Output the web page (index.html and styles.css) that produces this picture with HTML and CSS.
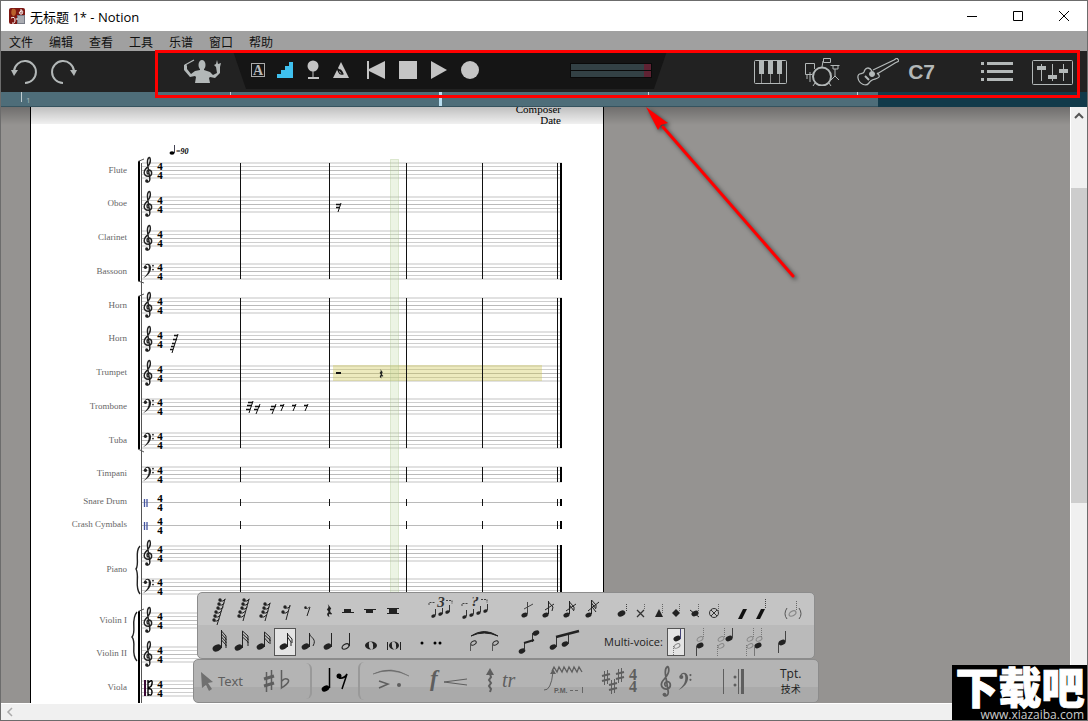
FILE: index.html
```
<!DOCTYPE html>
<html lang="zh-CN">
<head>
    <meta charset="utf-8">
    <title>无标题 1* - Notion</title>
    <link rel="stylesheet" href="styles.css">
</head>
<body>
    <!-- shared music symbols -->
    <svg class="sprite" aria-hidden="true">
        <symbol id="treble" viewBox="1 1 17 50" overflow="visible">
            <path d="M10 34C6 32 7 26 12 26C18 27 18 36 12 38C5 39 0 34 3 27C6 21 14 17 14 8C14 4 13 2 12 2C8 4 8 11 9 17L13 42C14 48 10 50 7 49" fill="none" stroke="currentColor" stroke-width="2.800"/>
            <circle cx="7" cy="47" r="3" fill="currentColor"/>
        </symbol>
        <symbol id="bass" viewBox="1 2 19 25" overflow="visible">
            <circle cx="5" cy="8" r="3" fill="currentColor"/>
            <path d="M3 8C3 0 15 -1 15 9C15 17 9 23 1 27C8 21 11 16 11 9C11 3 8 1 3 8Z" fill="currentColor"/>
            <circle cx="18.500" cy="5" r="1.600" fill="currentColor"/>
            <circle cx="18.500" cy="12" r="1.600" fill="currentColor"/>
        </symbol>
        <symbol id="hook" viewBox="0 0 8 5" overflow="visible">
            <circle cx="2" cy="2" r="1.700" fill="currentColor"/>
            <path d="M2 3Q5 4 7.500 1" fill="none" stroke="currentColor"/>
        </symbol>
        <symbol id="head" viewBox="0 0 10 8" overflow="visible">
            <ellipse cx="5" cy="4" rx="4.600" ry="3.200" transform="rotate(-25 5 4)" fill="currentColor"/>
        </symbol>
        <symbol id="open-head" viewBox="0 0 10 8" overflow="visible">
            <ellipse cx="5" cy="4" rx="4.300" ry="2.600" transform="rotate(-30 5 4)" fill="none" stroke="currentColor" stroke-width="1.300"/>
        </symbol>
        <symbol id="quarter-rest" viewBox="0 0 8 16" overflow="visible">
            <path d="M2 0L6 5Q3 8 7 11L6 12Q2 10 4 15Q-1 12 3 9L1 6Q4 4 2 0Z" fill="currentColor"/>
        </symbol>
        <symbol id="staff" viewBox="0 0 420 17" overflow="visible">
            <path d="M0 1H420M0 16H420" stroke="#e1e1e1" stroke-width="2"/>
            <path d="M0 4.500H420M0 12.500H420" stroke="#cecece"/>
            <path d="M0 8.500H420" stroke="#bababa"/>
        </symbol>
        <symbol id="meter" viewBox="0 0 8 18" overflow="visible">
            <text x="4" y="8" class="meter">4</text>
            <text x="4" y="17" class="meter">4</text>
        </symbol>
    </svg>

    <div class="window">
        <header class="titlebar">
            <svg class="app-icon" width="16" height="16" viewBox="0 0 16 16">
                <rect width="16" height="16" rx="2" fill="#7d1712"/>
                <path d="M3 1Q7 0 7 4T4 8Q1 6 3 1Z" fill="#b9612c"/>
                <path d="M8 7H16V16H8Z" fill="#777b86"/>
                <path d="M10 8V15M12 8V15M14 8V15" stroke="#ddd"/>
                <path d="M11 6Q9 4 12 3T13 6M12 1V7M2 10Q6 8 6 12T3 15M8 10V12" stroke="#fff" fill="none"/>
            </svg>
            <h1>无标题 1* - Notion</h1>
            <div class="window-buttons">
                <button aria-label="Minimize"><svg width="12" height="12"><path d="M1 6.500H11" stroke="#000"/></svg></button>
                <button aria-label="Maximize"><svg width="12" height="12"><path d="M1.500 1.500H10.500V10.500H1.500Z" stroke="#000" fill="none"/></svg></button>
                <button aria-label="Close"><svg width="12" height="12"><path d="M1 1L11 11M11 1L1 11" stroke="#000"/></svg></button>
            </div>
        </header>

        <nav class="menu">
            <a href="#">文件</a>
            <a href="#">编辑</a>
            <a href="#">查看</a>
            <a href="#">工具</a>
            <a href="#">乐谱</a>
            <a href="#">窗口</a>
            <a href="#">帮助</a>
        </nav>

        <div class="toolbar">
            <div class="history">
                <button aria-label="Undo"><svg width="28" height="28" viewBox="0 0 28 28"><path d="M4 13A11 11 0 1 1 15 25" fill="none" stroke="#b3b8b8" stroke-width="2"/><path d="M1 12H8L4 18Z" fill="#b3b8b8"/></svg></button>
                <button aria-label="Redo"><svg width="28" height="28" viewBox="0 0 28 28"><path d="M24 13A11 11 0 1 0 13 25" fill="none" stroke="#b3b8b8" stroke-width="2"/><path d="M27 12H20L24 18Z" fill="#b3b8b8"/></svg></button>
            </div>
            <button class="conductor" aria-label="Perform"><svg width="38" height="26" viewBox="0 0 38 26">
                <ellipse cx="19" cy="6" rx="3.500" ry="5" fill="#b3b8b8"/>
                <path d="M17 9H21V11L27 13L30 16L34 14L33 8L31 6L33 5L34 1L35 5L38 4L37 8V14L32 19L27 18L26 19L27 24H12L13 18L12 17L7 18L1 11V6L3 5L4 7L4 10L8 15L12 12L17 11Z" fill="#b3b8b8"/>
                <path d="M2 6L11 1" stroke="#b3b8b8" stroke-width="1.300"/>
            </svg></button>
            <div class="transport">
                <button aria-label="Chord text"><svg width="16" height="16"><rect x="1.500" y="1.500" width="13" height="13" fill="none" stroke="#aaa"/><text x="8" y="13" class="letter-a">A</text></svg></button>
                <button aria-label="Velocity"><svg width="16" height="16"><path d="M0 16V12H4V8H8V4H12V0H16V16Z" fill="#3fc0ee"/></svg></button>
                <button aria-label="Microphone"><svg width="12" height="20"><circle cx="6" cy="6" r="5.500" fill="#c4c4c4"/><path d="M6 10V18" stroke="#c4c4c4"/><path d="M1 18H12" stroke="#c4c4c4" stroke-width="2"/></svg></button>
                <button aria-label="Metronome"><svg width="16" height="16"><path d="M8 0L16 16H0Z" fill="#c4c4c4"/><path d="M1 3L10 12M4 8Q8 6 10 12Q6 13 5 8" stroke="#151515" stroke-width="1.200" fill="none"/></svg></button>
                <button aria-label="Rewind"><svg width="18" height="18"><path d="M0 0H2V8L18 0V18L2 10V18H0Z" fill="#c4c4c4"/></svg></button>
                <button aria-label="Stop"><svg width="18" height="18"><path d="M0 0H18V18H0Z" fill="#c4c4c4"/></svg></button>
                <button aria-label="Play"><svg width="16" height="18"><path d="M0 0L16 9L0 18Z" fill="#c4c4c4"/></svg></button>
                <button aria-label="Record"><svg width="18" height="18"><circle cx="9" cy="9" r="9" fill="#c4c4c4"/></svg></button>
                <div class="levels">
                    <div class="level"></div>
                    <div class="level"></div>
                </div>
            </div>
            <div class="instruments">
                <button aria-label="Keyboard"><svg width="33" height="24" viewBox="0 0 33 24"><rect x=".5" y=".5" width="32" height="23" rx="1" fill="none" stroke="#b3b8b8"/><path d="M5 1H10V14H5ZM14 1H19V14H14ZM23 1H28V14H23Z" fill="#b3b8b8"/><path d="M7.500 14V23M16.500 14V23M25.500 14V23" stroke="#888"/></svg></button>
                <button aria-label="Drums"><svg width="36" height="28" viewBox="0 0 36 28" fill="none" stroke="#b3b8b8"><circle cx="18" cy="18.500" r="9" stroke-width="2"/><path d="M8 16.500H1.500V5.500H10.500V11M3 17V21M6 14V24M19.500 .5H26.500V4.500H19.500ZM19 3L18 9M26.500 7.500H35.500M29 7V11H34V7M31 11V18L27 22M31 18L35 22M11 25L9 28M25 25L27 28"/></svg></button>
                <button aria-label="Guitar"><svg width="42" height="28" viewBox="0 0 42 28" fill="none" stroke="#b3b8b8"><path d="M15 13C12 8 8 10 7 14C6 17 0 14 1 20C2 26 9 29 12 25C14 20 20 22 22 19C23 17 21 16 20 15M16 12L37 2L40 0L42 3L38 5L20 16" stroke-width="1.300"/><circle cx="15" cy="16" r="2.500" fill="#b3b8b8"/><path d="M8 18L12 22" stroke-width="2"/></svg></button>
                <button class="chord">C7</button>
                <button class="list" aria-label="List"><svg width="32" height="20"><path d="M0 1.500H3M6 1.500H32M0 9.500H3M6 9.500H32M0 17.500H3M6 17.500H32" stroke="#b3b8b8" stroke-width="3"/></svg></button>
                <button aria-label="Mixer"><svg width="41" height="25" viewBox="0 0 41 25"><rect x=".5" y=".5" width="40" height="24" rx="1" fill="none" stroke="#b3b8b8"/><path d="M9.500 4V21M20.500 4V21M31.500 4V21" stroke="#b3b8b8"/><path d="M5 6H14V10H5ZM16 15H25V19H16ZM27 9H36V13H27Z" fill="#b3b8b8"/></svg></button>
            </div>
        </div>

        <div class="timeline">
            <div class="timeline-loaded">
                <span class="tick first">1</span>
                <span class="tick"></span>
                <span class="tick playhead"></span>
                <span class="tick"></span>
                <span class="tick"></span>
            </div>
        </div>

        <div class="workspace">
            <main class="canvas">
                <div class="sheet">
                    <svg width="572" height="596" viewBox="31 107 572 596">
                        <g class="credits">
                            <text x="561" y="113">Composer</text>
                            <text x="561" y="124">Date</text>
                        </g>
                        <!-- tempo -->
                        <ellipse cx="172" cy="153" rx="2.500" ry="1.800"/>
                        <path d="M174.500 145V153" stroke="#445"/>
                        <text x="176" y="154" class="tempo">=90</text>

                        <!-- staves -->
                        <g>
                            <use href="#staff" x="142" y="162" width="420" height="17"/>
                            <use href="#staff" x="142" y="196" width="420" height="17"/>
                            <use href="#staff" x="142" y="230" width="420" height="17"/>
                            <use href="#staff" x="142" y="263" width="420" height="17"/>
                            <use href="#staff" x="142" y="297" width="420" height="17"/>
                            <use href="#staff" x="142" y="331" width="420" height="17"/>
                            <use href="#staff" x="142" y="365" width="420" height="17"/>
                            <use href="#staff" x="142" y="398" width="420" height="17"/>
                            <use href="#staff" x="142" y="432" width="420" height="17"/>
                            <use href="#staff" x="142" y="466" width="420" height="17"/>
                            <use href="#staff" x="142" y="545" width="420" height="17"/>
                            <use href="#staff" x="142" y="578" width="420" height="17"/>
                            <use href="#staff" x="142" y="612" width="420" height="17"/>
                            <use href="#staff" x="142" y="646" width="420" height="17"/>
                            <use href="#staff" x="142" y="680" width="420" height="17"/>
                            <path d="M142 502.500H562M142 525.500H562" stroke="#bababa"/>
                        </g>

                        <!-- selection and playback position -->
                        <rect x="333" y="365" width="209" height="16" fill="#cdc64a" fill-opacity=".36"/>
                        <rect x="390.500" y="159.500" width="8" height="450" fill="#b9d59c" fill-opacity=".27" stroke="#a9c48c" stroke-opacity=".35"/>

                        <!-- bar lines -->
                        <path class="bars" d="M240.500 163V279M329.500 163V279M406.500 163V279M482.500 163V279M557.500 163V279
                            M240.500 298V448M329.500 298V448M406.500 298V448M482.500 298V448M557.500 298V448
                            M240.500 467V482M329.500 467V482M406.500 467V482M482.500 467V482M557.500 467V482
                            M240.500 499V506M329.500 499V506M406.500 499V506M482.500 499V506M557.500 499V506
                            M240.500 521V529M329.500 521V529M406.500 521V529M482.500 521V529M557.500 521V529
                            M240.500 545V595M329.500 545V595M406.500 545V595M482.500 545V595M557.500 545V595
                            M240.500 613V703M329.500 613V703M406.500 613V703M482.500 613V703M557.500 613V703"/>
                        <path class="end-bars" d="M561 163V280M561 298V448M561 467V482M561 499V506M561 521V529M561 545V595M561 613V703"/>
                        <path d="M141.500 163V703" stroke="#555"/>
                        <path d="M139 161V281M139 296V449M139 611V703" stroke="#000" stroke-width="2"/>
                        <path d="M138 161.500L144 159M138 281L144 283M138 296.500L144 294M138 449L144 452M138 611.500L144 609" stroke="#555" fill="none"/>
                        <path d="M140 546C134 552 140 563 136 569C140 576 134 587 140 594M137 612C130 620 137 631 132 637C137 643 130 654 137 661" stroke="#222" stroke-width="1.400" fill="none"/>

                        <!-- clefs -->
                        <g>
                            <use href="#treble" x="143" y="157" width="10" height="26"/>
                            <use href="#treble" x="143" y="191" width="10" height="26"/>
                            <use href="#treble" x="143" y="225" width="10" height="26"/>
                            <use href="#bass" x="143" y="264" width="11" height="14"/>
                            <use href="#treble" x="143" y="292" width="10" height="26"/>
                            <use href="#treble" x="143" y="326" width="10" height="26"/>
                            <use href="#treble" x="143" y="360" width="10" height="26"/>
                            <use href="#bass" x="143" y="399" width="11" height="14"/>
                            <use href="#bass" x="143" y="433" width="11" height="14"/>
                            <use href="#bass" x="143" y="467" width="11" height="14"/>
                            <use href="#treble" x="143" y="540" width="10" height="26"/>
                            <use href="#bass" x="143" y="579" width="11" height="14"/>
                            <use href="#treble" x="143" y="607" width="10" height="26"/>
                            <use href="#treble" x="143" y="641" width="10" height="26"/>
                            <path d="M144.500 499V507M147 499V507M144.500 522V530M147 522V530" stroke="#4455a0" stroke-width="1.300"/>
                            <path d="M145 680V696" stroke="#3b0a35" stroke-width="2"/>
                            <path d="M148 680V696M148 683Q153 678 152 684Q151 688 148 687M148 689Q152 688 152 692Q152 697 148 694" stroke="#000" stroke-width="1.400" fill="none"/>
                        </g>

                        <!-- time signatures -->
                        <g>
                            <use href="#meter" x="156" y="162" width="8" height="18"/>
                            <use href="#meter" x="156" y="196" width="8" height="18"/>
                            <use href="#meter" x="156" y="230" width="8" height="18"/>
                            <use href="#meter" x="156" y="263" width="8" height="18"/>
                            <use href="#meter" x="156" y="297" width="8" height="18"/>
                            <use href="#meter" x="156" y="331" width="8" height="18"/>
                            <use href="#meter" x="156" y="365" width="8" height="18"/>
                            <use href="#meter" x="156" y="398" width="8" height="18"/>
                            <use href="#meter" x="156" y="432" width="8" height="18"/>
                            <use href="#meter" x="156" y="466" width="8" height="18"/>
                            <use href="#meter" x="156" y="494" width="8" height="18"/>
                            <use href="#meter" x="156" y="517" width="8" height="18"/>
                            <use href="#meter" x="156" y="545" width="8" height="18"/>
                            <use href="#meter" x="156" y="578" width="8" height="18"/>
                            <use href="#meter" x="156" y="612" width="8" height="18"/>
                            <use href="#meter" x="156" y="646" width="8" height="18"/>
                            <use href="#meter" x="156" y="680" width="8" height="18"/>
                        </g>

                        <!-- rests -->
                        <g stroke="#111">
                            <path d="M341 203L338 212M178 334L172 353M253 401L249 413M260 404L256 414M276 404L272 414M284 404L281 411M296 404L293 411M308 404L305 411"/>
                            <path d="M336 204.500H341M336 207.500H340M174 335.500H178M173 339.500H177M172 343.500H175M171 346.500H174M170 349.500H173M248 402.500H253M247 405.500H252M246 409.500H250M255 406.500H260M254 409.500H258M271 406.500H276M270 409.500H274M280 405.500H284M292 405.500H296M304 405.500H308" stroke-width="1.300"/>
                            <path d="M336 373H341" stroke-width="2"/>
                        </g>
                        <use href="#quarter-rest" x="379" y="369" width="5" height="10"/>

                        <g class="names">
                            <text x="127" y="173">Flute</text>
                            <text x="127" y="206">Oboe</text>
                            <text x="127" y="240">Clarinet</text>
                            <text x="127" y="274">Bassoon</text>
                            <text x="127" y="308">Horn</text>
                            <text x="127" y="341">Horn</text>
                            <text x="127" y="375">Trumpet</text>
                            <text x="127" y="409">Trombone</text>
                            <text x="127" y="443">Tuba</text>
                            <text x="127" y="476">Timpani</text>
                            <text x="127" y="504">Snare Drum</text>
                            <text x="127" y="527">Crash Cymbals</text>
                            <text x="127" y="572">Piano</text>
                            <text x="127" y="623">Violin I</text>
                            <text x="127" y="656">Violin II</text>
                            <text x="127" y="690">Viola</text>
                        </g>
                    </svg>
                </div>
            </main>
            <div class="scroll-v">
                <button aria-label="Scroll up"><svg width="10" height="8"><path d="M1 6L5 2L9 6" fill="none" stroke="#555" stroke-width="2"/></svg></button>
                <div class="scroll-space"></div>
                <div class="scroll-thumb"></div>
                <div class="scroll-rest"></div>
            </div>
        </div>
        <div class="scroll-h">
            <button aria-label="Scroll left"><svg width="8" height="10"><path d="M6 1L2 5L6 9" fill="none" stroke="#aaa" stroke-width="1.500"/></svg></button>
        </div>

        <div class="palette">
            <div class="notes">
                <div class="row">
                    <button><svg width="22" height="28"><path d="M17 2L9 28" stroke="#222"/><use href="#hook" x="10" y="1" width="8" height="5"/><use href="#hook" x="9" y="5" width="8" height="5"/><use href="#hook" x="8" y="9" width="8" height="5"/><use href="#hook" x="6" y="13" width="8" height="5"/><use href="#hook" x="5" y="17" width="8" height="5"/><use href="#hook" x="4" y="21" width="8" height="5"/></svg></button>
                    <button><svg width="22" height="28"><path d="M19 2L13 24" stroke="#222"/><use href="#hook" x="12" y="1" width="8" height="5"/><use href="#hook" x="11" y="5" width="8" height="5"/><use href="#hook" x="10" y="9" width="8" height="5"/><use href="#hook" x="8" y="13" width="8" height="5"/><use href="#hook" x="7" y="17" width="8" height="5"/></svg></button>
                    <button><svg width="22" height="28"><path d="M18 6L13 24" stroke="#222"/><use href="#hook" x="11" y="5" width="8" height="5"/><use href="#hook" x="10" y="9" width="8" height="5"/><use href="#hook" x="9" y="13" width="8" height="5"/><use href="#hook" x="7" y="17" width="8" height="5"/></svg></button>
                    <button><svg width="22" height="28"><path d="M16 8L12 23" stroke="#222"/><use href="#hook" x="9" y="8" width="8" height="5"/><use href="#hook" x="7" y="13" width="8" height="5"/></svg></button>
                    <button><svg width="22" height="28"><path d="M14 10L11 19" stroke="#222"/><use href="#hook" x="8" y="9" width="6" height="4"/></svg></button>
                    <button><svg width="22" height="28"><use href="#quarter-rest" x="8" y="7" width="7" height="14"/></svg></button>
                    <button><svg width="22" height="28"><path d="M2 15.500H14" stroke="#222"/><path d="M4 12H11V16H4Z" fill="#222"/></svg></button>
                    <button><svg width="22" height="28"><path d="M2 12.500H14" stroke="#222"/><path d="M4 12H11V16H4Z" fill="#222"/></svg></button>
                    <button><svg width="22" height="28"><path d="M3 11.500H15M3 16.500H15" stroke="#222"/><path d="M5 11H13V17H5Z" fill="#222"/></svg></button>
                    <button class="tuplet"><svg width="34" height="28"><path d="M5 8V5.500H11M22 3.500H28V7" fill="none" stroke="#444" stroke-dasharray="2 1"/><text x="17" y="10" class="tuplet-text">3</text><use href="#head" x="7" y="17" width="5" height="4"/><use href="#head" x="14" y="15" width="5" height="4"/><use href="#head" x="21" y="13" width="5" height="4"/><path d="M11.500 12V18M18.500 11V17M25.500 8V15" stroke="#333"/></svg></button>
                    <button><svg width="34" height="28"><path d="M4 9V6.500H10M23 2.500H29V6" fill="none" stroke="#444" stroke-dasharray="2 1"/><text x="17" y="9" class="tuplet-text">?</text><use href="#head" x="4" y="18" width="5" height="4"/><use href="#head" x="11" y="16" width="5" height="4"/><use href="#head" x="18" y="14" width="5" height="4"/><use href="#head" x="25" y="12" width="5" height="4"/><path d="M8.500 13V19M15.500 12V17M22.500 9V15M29.500 7V13" stroke="#333"/></svg></button>
                    <button class="grace"><svg width="22" height="28"><use href="#head" x="5" y="15" width="7" height="6"/><path d="M11.500 5V17M8 12L17 7" stroke="#444"/></svg></button>
                    <button><svg width="22" height="28"><use href="#head" x="4" y="15" width="7" height="6"/><path d="M10.500 4V17M10.500 5L15 10L14 14M7 13L16 7" stroke="#222" fill="none"/></svg></button>
                    <button><svg width="22" height="28"><use href="#head" x="3" y="15" width="7" height="6"/><path d="M9.500 4V17M9.500 5L14 10V13M9.500 8L14 14M6 14L16 7" stroke="#222" fill="none"/></svg></button>
                    <button><svg width="22" height="28"><use href="#head" x="3" y="15" width="7" height="6"/><path d="M9.500 3V17M9.500 3L14 8V11M9.500 6L14 12M9.500 9L14 15M6 14L17 5" stroke="#222" fill="none"/></svg></button>
                    <button class="slim heads"><svg width="18" height="28"><use href="#head" x="4" y="13" width="9" height="7"/><path d="M13.500 7V15" stroke="#444" stroke-dasharray="1 1"/></svg></button>
                    <button class="slim"><svg width="18" height="28"><path d="M6 13L13 20M13 13L6 20" stroke="#333" stroke-width="1.300"/><path d="M13.500 7V13" stroke="#666" stroke-dasharray="1 1"/></svg></button>
                    <button class="slim"><svg width="18" height="28"><path d="M10 12L14 20H6Z" fill="#222"/><path d="M13.500 7V16" stroke="#666" stroke-dasharray="1 1"/></svg></button>
                    <button class="slim"><svg width="18" height="28"><path d="M9 12L13 16L9 20L5 16Z" fill="#222"/><path d="M12.500 7V14" stroke="#666" stroke-dasharray="1 1"/></svg></button>
                    <button class="slim"><svg width="18" height="28"><use href="#head" x="6" y="13" width="8" height="7"/><path d="M5 13L14 20" stroke="#222"/><path d="M13.500 7V14" stroke="#666" stroke-dasharray="1 1"/></svg></button>
                    <button class="slim"><svg width="18" height="28"><circle cx="11" cy="16" r="4.500" fill="none" stroke="#333"/><path d="M8 13L14 19M14 13L8 19" stroke="#333"/><path d="M15.500 7V14" stroke="#666" stroke-dasharray="1 1"/></svg></button>
                    <button class="slash"><svg width="20" height="28"><path d="M6 22L10 22L15 12H11Z" fill="#111"/></svg></button>
                    <button class="mid"><svg width="20" height="28"><path d="M4 22L8 22L13 12H9Z" fill="#111"/><path d="M13.500 2V12" stroke="#444" stroke-dasharray="1 1"/></svg></button>
                    <button class="ghost"><svg width="22" height="28"><path d="M5 11Q1 17 5 22M17 11Q21 17 17 22" fill="none" stroke="#555"/><use href="#open-head" x="6" y="13" width="9" height="7" class="dim"/><path d="M14.500 4V14" stroke="#666" stroke-dasharray="1 1"/></svg></button>
                </div>
                <div class="row">
                    <button><svg width="22" height="28"><use href="#head" x="4" y="16" width="10" height="8"/><path d="M13.500 2V20M13.500 3L18 8V12M13.500 6L18 11V15M13.500 9L18 14V18M13.500 12L18 17V20" fill="none" stroke="#222"/></svg></button>
                    <button><svg width="22" height="28"><use href="#head" x="4" y="16" width="9" height="7"/><path d="M12.500 3V20M12.500 3L18 8V12M12.500 6L18 11V15M12.500 9L18 14V18" fill="none" stroke="#222"/></svg></button>
                    <button><svg width="22" height="28"><use href="#head" x="4" y="15" width="9" height="7"/><path d="M12.500 4V19M12.500 4L18 9V13M12.500 7L18 12V16M12.500 10L17 15" fill="none" stroke="#222"/></svg></button>
                    <button class="selected"><svg width="22" height="28"><use href="#head" x="5" y="15" width="9" height="7"/><path d="M13.500 5V19M13.500 6L18 11V15M13.500 9L17 14V18" fill="none" stroke="#222"/></svg></button>
                    <button><svg width="22" height="28"><use href="#head" x="5" y="15" width="9" height="7"/><path d="M13.500 5V19M13.500 6C15 10 21 11 17 18" fill="none" stroke="#222"/></svg></button>
                    <button><svg width="22" height="28"><use href="#head" x="5" y="15" width="9" height="7"/><path d="M13.500 5V19" stroke="#222"/></svg></button>
                    <button><svg width="22" height="28"><use href="#open-head" x="1" y="15" width="9" height="7"/><path d="M9.500 5V18" stroke="#222"/></svg></button>
                    <button><svg width="22" height="28"><path fill-rule="evenodd" d="M3 17.500a6 4 0 1 0 12 0a6 4 0 1 0 -12 0M7 17a2 3 -20 1 0 4 1a2 3 -20 1 0 -4 -1" fill="#222"/></svg></button>
                    <button><svg width="22" height="28"><path fill-rule="evenodd" d="M5 17.500a5 4 0 1 0 10 0a5 4 0 1 0 -10 0M8 17a2 3 -20 1 0 4 1a2 3 -20 1 0 -4 -1" fill="#222"/><path d="M3.500 14V22M16.500 14V22" stroke="#222"/></svg></button>
                    <button class="dots"><svg width="16" height="28"><circle cx="8" cy="15" r="1.500"/></svg></button>
                    <button class="dot"><svg width="16" height="28"><circle cx="5" cy="15" r="1.500"/><circle cx="10" cy="15" r="1.500"/></svg></button>
                    <button class="tie"><svg width="44" height="28"><path d="M9 8Q22 -1 36 8Q22 2 9 8Z" fill="#222" stroke="#222"/><use href="#open-head" x="8" y="12" width="7" height="6"/><use href="#open-head" x="30" y="12" width="7" height="6"/><path d="M8.500 15V23M30.500 15V23" stroke="#555"/></svg></button>
                    <button class="beam"><svg width="34" height="28"><use href="#head" x="4" y="20" width="8" height="6"/><use href="#head" x="18" y="2" width="8" height="6"/><path d="M10.500 14V22M18.500 5V14" stroke="#333"/><path d="M10 15L20 12" stroke="#222" stroke-width="2"/></svg></button>
                    <button><svg width="34" height="28"><use href="#head" x="1" y="16" width="8" height="6"/><use href="#head" x="13" y="13" width="8" height="6"/><path d="M8.500 9V19M20.500 6V16" stroke="#333"/><path d="M8 9L31 3" stroke="#222" stroke-width="2.500"/></svg></button>
                    <span class="voice-label">Multi-voice:</span>
                    <div class="voices">
                        <button class="selected slim"><svg width="18" height="28"><use href="#head" x="6" y="7" width="8" height="7"/><path d="M13.500 1V11" stroke="#447"/><use href="#open-head" x="6" y="15" width="8" height="6" class="dim"/><path d="M6.500 18V27" stroke="#777" stroke-dasharray="1 1"/></svg></button>
                        <button class="slim"><svg width="18" height="28"><use href="#open-head" x="5" y="8" width="8" height="6" class="dim"/><path d="M12.500 0V10" stroke="#777" stroke-dasharray="1 1"/><use href="#head" x="5" y="14" width="8" height="7"/><path d="M5.500 18V28" stroke="#444"/></svg></button>
                        <button class="mid"><svg width="20" height="28"><use href="#open-head" x="2" y="8" width="8" height="6" class="dim"/><use href="#open-head" x="2" y="15" width="8" height="6" class="dim"/><use href="#head" x="10" y="7" width="8" height="7"/><path d="M17.500 0V10" stroke="#444"/><path d="M2.500 17V28M9.500 0V10" stroke="#777" stroke-dasharray="1 1"/></svg></button>
                        <button><svg width="28" height="28"><use href="#open-head" x="5" y="8" width="8" height="6" class="dim"/><use href="#open-head" x="5" y="15" width="8" height="6" class="dim"/><use href="#open-head" x="14" y="8" width="8" height="6" class="dim"/><use href="#head" x="13" y="14" width="8" height="7"/><path d="M5.500 17V28M12.500 0V10M20.500 0V10" stroke="#777" stroke-dasharray="1 1"/><path d="M13.500 18V28" stroke="#777"/></svg></button>
                        <button class="dot"><svg width="16" height="28"><use href="#head" x="3" y="11" width="8" height="7"/><path d="M10.500 3V14M3.500 15V25" stroke="#444"/></svg></button>
                    </div>
                </div>
            </div>

            <div class="groups">
                <div class="group-left">
                    <button class="text-tool"><svg width="14" height="20"><path d="M1 1L13 11L8 12L12 18L9 20L6 14L2 17Z" fill="#707070"/></svg>Text</button>
                    <button aria-label="Accidentals"><svg width="32" height="28" fill="none" stroke="#5e5e5e"><path d="M5.500 5V25M10.500 3V23" stroke-width="1.500"/><path d="M3 12L13 9M3 19L13 16" stroke-width="3"/><path d="M20.500 3V21Q31 14 26 12Q23 11 21 14" stroke-width="1.500"/></svg></button>
                </div>
                <button class="current" aria-label="Notes and rests"><svg width="34" height="28"><use href="#head" x="3" y="18" width="9" height="7"/><path d="M11.500 1V21" stroke="#000" stroke-width="1.500"/><circle cx="21" cy="9" r="2.500"/><path d="M21 11Q26 12 29 7L24 22" stroke="#000" stroke-width="1.500" fill="none"/></svg></button>
                <div class="group-right">
                    <button aria-label="Articulations"><svg width="40" height="28"><path d="M2 7Q20 -2 38 9Q20 0 2 7Z" fill="#666" stroke="#666" stroke-width=".5"/><path d="M8 14L17 17L8 21" fill="none" stroke="#5e5e5e" stroke-width="1.500"/><circle cx="28" cy="18" r="2" fill="#5e5e5e"/></svg></button>
                    <button aria-label="Dynamics"><svg width="42" height="28"><text x="3" y="19" class="forte">f</text><path d="M40 12L17 15L40 18" fill="none" stroke="#5e5e5e"/></svg></button>
                    <button class="trill" aria-label="Ornaments"><svg width="34" height="28"><path d="M5 1L9 8H1Z" fill="#5e5e5e"/><path d="M5 7L6 10L4 13L6 16L4 19L6 22L5 25" fill="none" stroke="#5e5e5e" stroke-width="2"/><text x="17" y="20" class="tr">tr</text></svg></button>
                    <button class="pm" aria-label="Guitar marks"><svg width="44" height="34"><path d="M3 26Q10 27 12 8" fill="none" stroke="#5e5e5e"/><path d="M9 10L12 5L15 10Z" fill="#5e5e5e"/><path d="M11 7L13 3L16 8L18 3L21 8L23 3L26 8L28 3L31 8L33 3L36 8L38 3L41 8" fill="none" stroke="#5e5e5e" stroke-width="1.300"/><text x="13" y="29" class="pm-text">P.M.</text><path d="M29 26.500H39" stroke="#666" stroke-dasharray="3 2"/><path d="M41.500 23V29" stroke="#666"/></svg></button>
                    <button class="keys" aria-label="Key and time signatures"><svg width="42" height="28" fill="none" stroke="#5e5e5e"><path d="M5.500 4V18M8.500 3V17M12.500 13V27M15.500 12V26M19.500 2V16M22.500 1V15"/><path d="M3 9L11 7M3 14L11 12M10 18L18 16M10 23L18 21M17 7L25 5M17 12L25 10" stroke-width="2"/><text x="34" y="13" class="big-meter">4</text><text x="34" y="25" class="big-meter">4</text></svg></button>
                    <button class="clefs" aria-label="Clefs"><svg width="38" height="32"><use href="#treble" x="2" y="1" width="14" height="31"/><use href="#bass" x="21" y="8" width="14" height="17"/></svg></button>
                    <button class="lines" aria-label="Barlines"><svg width="28" height="28" fill="#5e5e5e"><path d="M4 2H5V27H4ZM19 2H20V27H19ZM22 2H25V27H22Z"/><circle cx="16" cy="10" r="1.500"/><circle cx="16" cy="18" r="1.500"/></svg></button>
                    <button class="technique"><span class="tpt">Tpt.</span><span class="jishu">技术</span></button>
                </div>
            </div>
        </div>

        <!-- callout -->
        <div class="highlight"></div>
        <svg class="arrow" width="170" height="190" viewBox="636 97 170 190">
            <path d="M663 127L793 276" stroke="#f00" stroke-width="3" stroke-linecap="round"/>
            <path d="M646 107L668 123L661 125L658 130Z" fill="#f00"/>
        </svg>

        <div class="watermark">
            <span class="brand">下载吧</span>
            <span class="site">www.xiazaiba.com</span>
        </div>
    </div>
</body>
</html>
```
FILE: styles.css
```
body {
margin: 0;
font-family: "Open Sans", "Noto Sans CJK SC", sans-serif;
font-size: 12px;
color: #222;
}

button {
display: flex;
align-items: center;
justify-content: center;
margin: 0;
padding: 0;
border: none;
background: none;
color: inherit;
font-family: inherit;
font-size: 12px;
cursor: pointer;
}

svg {
display: block;
flex-shrink: 0;
}

.sprite {
position: absolute;
width: 0;
height: 0;
}

.window {
position: relative;
display: flex;
flex-direction: column;
height: 100vh;
box-sizing: border-box;
border: 1px solid #6c6c6c;
overflow: hidden;
}

/* title and menu */
.titlebar {
display: flex;
align-items: center;
height: 30px;
padding-left: 8px;
background-color: #fff;
color: #000;
}

h1 {
flex: 1;
margin: 0 0 0 5px;
font-size: 13px;
font-weight: normal;
}

.window-buttons {
display: flex;
}

.window-buttons button {
width: 46px;
height: 28px;
}

.menu {
display: flex;
align-items: center;
gap: 16px;
height: 20px;
padding-left: 8px;
background-color: #a0a0a0;
}

.menu a {
color: #111;
line-height: 20px;
padding-top: 3px;
text-decoration: none;
}

/* toolbar */
.toolbar {
display: flex;
align-items: flex-start;
height: 41px;
background-color: #222;
}

.toolbar button {
height: 42px;
}

.history {
display: flex;
gap: 12px;
padding-left: 9px;
}

.conductor {
margin-left: 105px;
}

.transport {
display: flex;
align-items: center;
height: 38px;
margin-left: 12px;
padding: 0 15px 0 17px;
background-color: #151515;
clip-path: polygon(0 0, 100% 0, 97% 100%, 3% 100%);
}

.transport button {
margin-right: 14px;
}

.transport button:nth-child(1) {
margin-right: 11px;
}

.transport button:nth-child(4) {
margin-right: 18px;
}

.letter-a {
font: bold 14px "Liberation Serif", serif;
text-anchor: middle;
fill: #b8b8b8;
}

.levels {
width: 80px;
margin-left: 77px;
display: flex;
flex-direction: column;
gap: 1px;
border: 1px solid #0a0a0a;
background-color: #0a0a0a;
}

.level {
height: 6px;
background: linear-gradient(90deg, #334145 91%, #5f2233 91%);
}

.instruments {
display: flex;
margin-left: auto;
padding-right: 14px;
gap: 17px;
}

.chord {
margin-left: -8px;
color: #b3b8b8;
}

.toolbar .chord {
font: bold 21px "Liberation Sans", sans-serif;
}

.list {
margin: 0 2px 0 29px;
}

/* timeline */
.timeline {
height: 15px;
background-color: #123a4a;
}

.timeline-loaded {
display: flex;
margin-right: 209px;
height: 14px;
padding-left: 20px;
overflow: hidden;
background-color: #4e6d79;
border-bottom: 1px solid #35535f;
}

.tick {
flex: 0 0 209px;
box-sizing: border-box;
height: 3px;
border-left: 1px solid #c0ccd0;
}

.tick.first {
height: 10px;
padding: 2px 0 0 4px;
font-size: 8px;
line-height: 12px;
color: #a5b6bd;
}

.tick.playhead {
height: 14px;
border-left: 3px solid #b8ddef;
}

/* score */
.workspace {
flex: 1;
display: flex;
min-height: 0;
}

.canvas {
flex: 1;
min-width: 0;
overflow: hidden;
background: linear-gradient(rgba(0, 0, 0, .25), rgba(0, 0, 0, 0) 18px), #959391;
}

.sheet {
width: 572px;
height: 100%;
margin-left: 29px;
border-left: 1px solid #000;
border-right: 1px solid #000;
background: linear-gradient(rgba(0, 0, 0, .25), rgba(0, 0, 0, .06) 17px, rgba(0, 0, 0, 0) 17px), #fff;
}

.credits {
font: 11px "Liberation Serif", serif;
text-anchor: end;
}

.names {
font: 9px "Liberation Serif", serif;
text-anchor: end;
fill: #666;
}

.tempo {
font: italic bold 8px "Liberation Serif", serif;
}

.meter {
font: bold 11px "Liberation Serif", serif;
text-anchor: middle;
}

.bars {
stroke: #111;
}

.end-bars {
stroke: #000;
stroke-width: 2px;
}

/* scroll bars */
.scroll-v {
display: flex;
flex-direction: column;
width: 16px;
border-left: 1px solid #fff;
background-color: #f0f0f0;
}

.scroll-v button {
height: 18px;
}

.scroll-space {
flex: 63;
}

.scroll-thumb {
flex: 315;
background-color: #cdcdcd;
}

.scroll-rest {
flex: 200;
}

.scroll-h {
display: flex;
height: 16px;
border-top: 1px solid #fff;
background-color: #f0f0f0;
}

.scroll-h button {
width: 17px;
}

/* floating palette */
.palette {
position: absolute;
left: 192px;
bottom: 17px;
width: 626px;
}

.notes {
margin: 0 4px;
padding: 2px 10px 1px;
border: 1px solid #8c8c8c;
border-radius: 5px;
background: linear-gradient(#c4c4c4 50%, #bababa 50%);
}

.row {
display: flex;
align-items: center;
height: 31px;
}

.row button {
height: 28px;
}

.tuplet {
margin-left: 18px;
}

.grace {
margin-left: 24px;
}

.heads {
margin-left: 9px;
}

.slash {
margin-left: 11px;
}

.ghost {
margin-left: 10px;
}

.dots {
margin-left: 8px;
}

.tie {
margin-left: 16px;
}

.beam {
margin-left: 8px;
}

.row .selected {
background-color: #e4e4e4;
box-shadow: inset 0 0 0 1px #555;
}

.dim {
color: #888;
}

.tuplet-text {
font: italic bold 15px "Liberation Serif", serif;
text-anchor: middle;
fill: #333;
}

.voice-label {
margin-left: 22px;
width: 63px;
white-space: nowrap;
font-size: 11px;
}

.voices {
display: flex;
gap: 6px;
}

.groups {
display: flex;
align-items: center;
height: 42px;
border: 1px solid #8c8c8c;
border-radius: 5px;
background: linear-gradient(#b4b4b4 65%, #aaa 65%);
color: #5e5e5e;
}

.group-left {
display: flex;
align-items: center;
gap: 18px;
height: 36px;
padding: 0 17px 0 6px;
border-right: 2px solid #999;
border-radius: 6px;
}

.text-tool {
gap: 4px;
}

.group-left .text-tool {
font-family: "Noto Sans", sans-serif;
font-size: 13px;
}

.current {
margin: 0 6px;
color: #000;
}

.group-right {
flex: 1;
display: flex;
align-items: center;
height: 38px;
padding-left: 11px;
border-left: 2px solid #999;
border-radius: 6px;
}

.group-right button {
margin-right: 16px;
}

.group-right .pm {
margin: 0 14px 0 6px;
}

.group-right .clefs {
margin-right: 24px;
}

.group-right .lines {
margin-right: 33px;
}

.group-right .technique {
flex-direction: column;
margin: 0;
color: #222;
}

.tpt {
line-height: 16px;
}

.jishu {
font-size: 10px;
line-height: 14px;
}

.forte {
font: italic bold 23px "Liberation Serif", serif;
fill: #5e5e5e;
}

.tr {
font: italic 20px "Liberation Serif", serif;
fill: #5e5e5e;
}

.pm-text {
font: bold 7px "Liberation Sans", sans-serif;
fill: #5e5e5e;
}

.big-meter {
font: bold 16px "Liberation Serif", serif;
text-anchor: middle;
fill: #5e5e5e;
stroke: none;
}

/* callout */
.highlight {
position: absolute;
top: 49px;
left: 154px;
right: 7px;
height: 42px;
border: 3px solid #f00;
pointer-events: none;
}

.arrow {
position: absolute;
top: 96px;
left: 635px;
filter: drop-shadow(2px 2px 2px rgba(0, 0, 0, .6));
pointer-events: none;
}

.watermark {
position: absolute;
right: -1px;
bottom: -1px;
display: flex;
flex-direction: column;
align-items: center;
width: 136px;
height: 56px;
background-color: #000;
color: #fff;
}

.brand {
font-family: "Noto Sans CJK SC", sans-serif;
font-size: 43px;
font-weight: 900;
line-height: 40px;
-webkit-text-stroke: 1px #fff;
}

.site {
align-self: flex-end;
padding-right: 4px;
font-size: 12px;
line-height: 20px;
color: #ccc;
}
```
